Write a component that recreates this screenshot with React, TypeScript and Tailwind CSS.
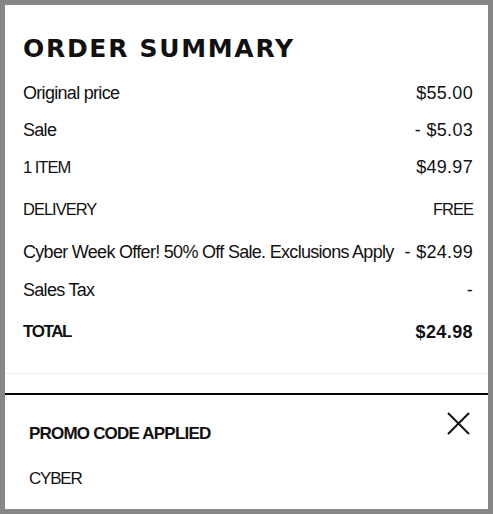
const rows = [
  { label: 'Original price', value: '$55.00', h: 'h-[37px]', caps: false },
  { label: 'Sale', value: '- $5.03', h: 'h-[37px]', caps: false },
  { label: '1 ITEM', value: '$49.97', h: 'h-[37px]', caps: true },
  { label: 'DELIVERY', value: 'FREE', h: 'h-[47px]', caps: true },
  { label: 'Cyber Week Offer! 50% Off Sale. Exclusions Apply', value: '- $24.99', h: 'h-[39px]', caps: false },
  { label: 'Sales Tax', value: '-', h: 'h-[36px]', caps: false },
]

const App = () => {
  return (
    <div className="w-[493px] h-[514px] bg-[#878787] p-[5px] font-['Liberation_Sans',sans-serif] text-[#111]">
      <div className="w-full h-full bg-white flex flex-col">
        <div className="pl-[18px] pr-[15px] pt-[29px]">
          <h1 className="font-['DejaVu_Sans',sans-serif] font-bold text-[25px] leading-[30px] tracking-[1.7px] mb-[11px]">
            ORDER SUMMARY
          </h1>
          {rows.map((r) => (
            <div key={r.label} className={`${r.h} flex items-center justify-between whitespace-nowrap text-[18px]`}>
              <span className={r.caps ? 'text-[16.5px] tracking-[-1px]' : 'tracking-[-0.7px]'}>{r.label}</span>
              <span className={r.label === 'DELIVERY' ? 'text-[16.5px] tracking-[-1px]' : 'tracking-[0.3px]'}>{r.value}</span>
            </div>
          ))}
          <div className="h-[48px] flex items-center justify-between text-[17px] font-bold">
            <span className="tracking-[-1.4px]">TOTAL</span>
            <span className="text-[18px] tracking-[0.4px]">$24.98</span>
          </div>
        </div>
        <div className="mt-[17px] border-t border-[#ececec]" />
        <div className="h-[19px]" />
        <div className="border-t-2 border-black flex-1 pl-[24px] pr-[18px] relative">
          <div className="pt-[29px] text-[17px] tracking-[-0.8px] font-bold leading-[20px]">PROMO CODE APPLIED</div>
          <div className="mt-[25px] text-[17px] tracking-[-1.2px] leading-[20px]">CYBER</div>
          <button className="absolute right-[18px] top-[17px]">
            <svg width="23" height="23" viewBox="0 0 23 23" fill="none" stroke="#111" strokeWidth="2">
              <path d="M1 1 L22 22 M22 1 L1 22" />
            </svg>
          </button>
        </div>
      </div>
    </div>
  )
}

export default App
